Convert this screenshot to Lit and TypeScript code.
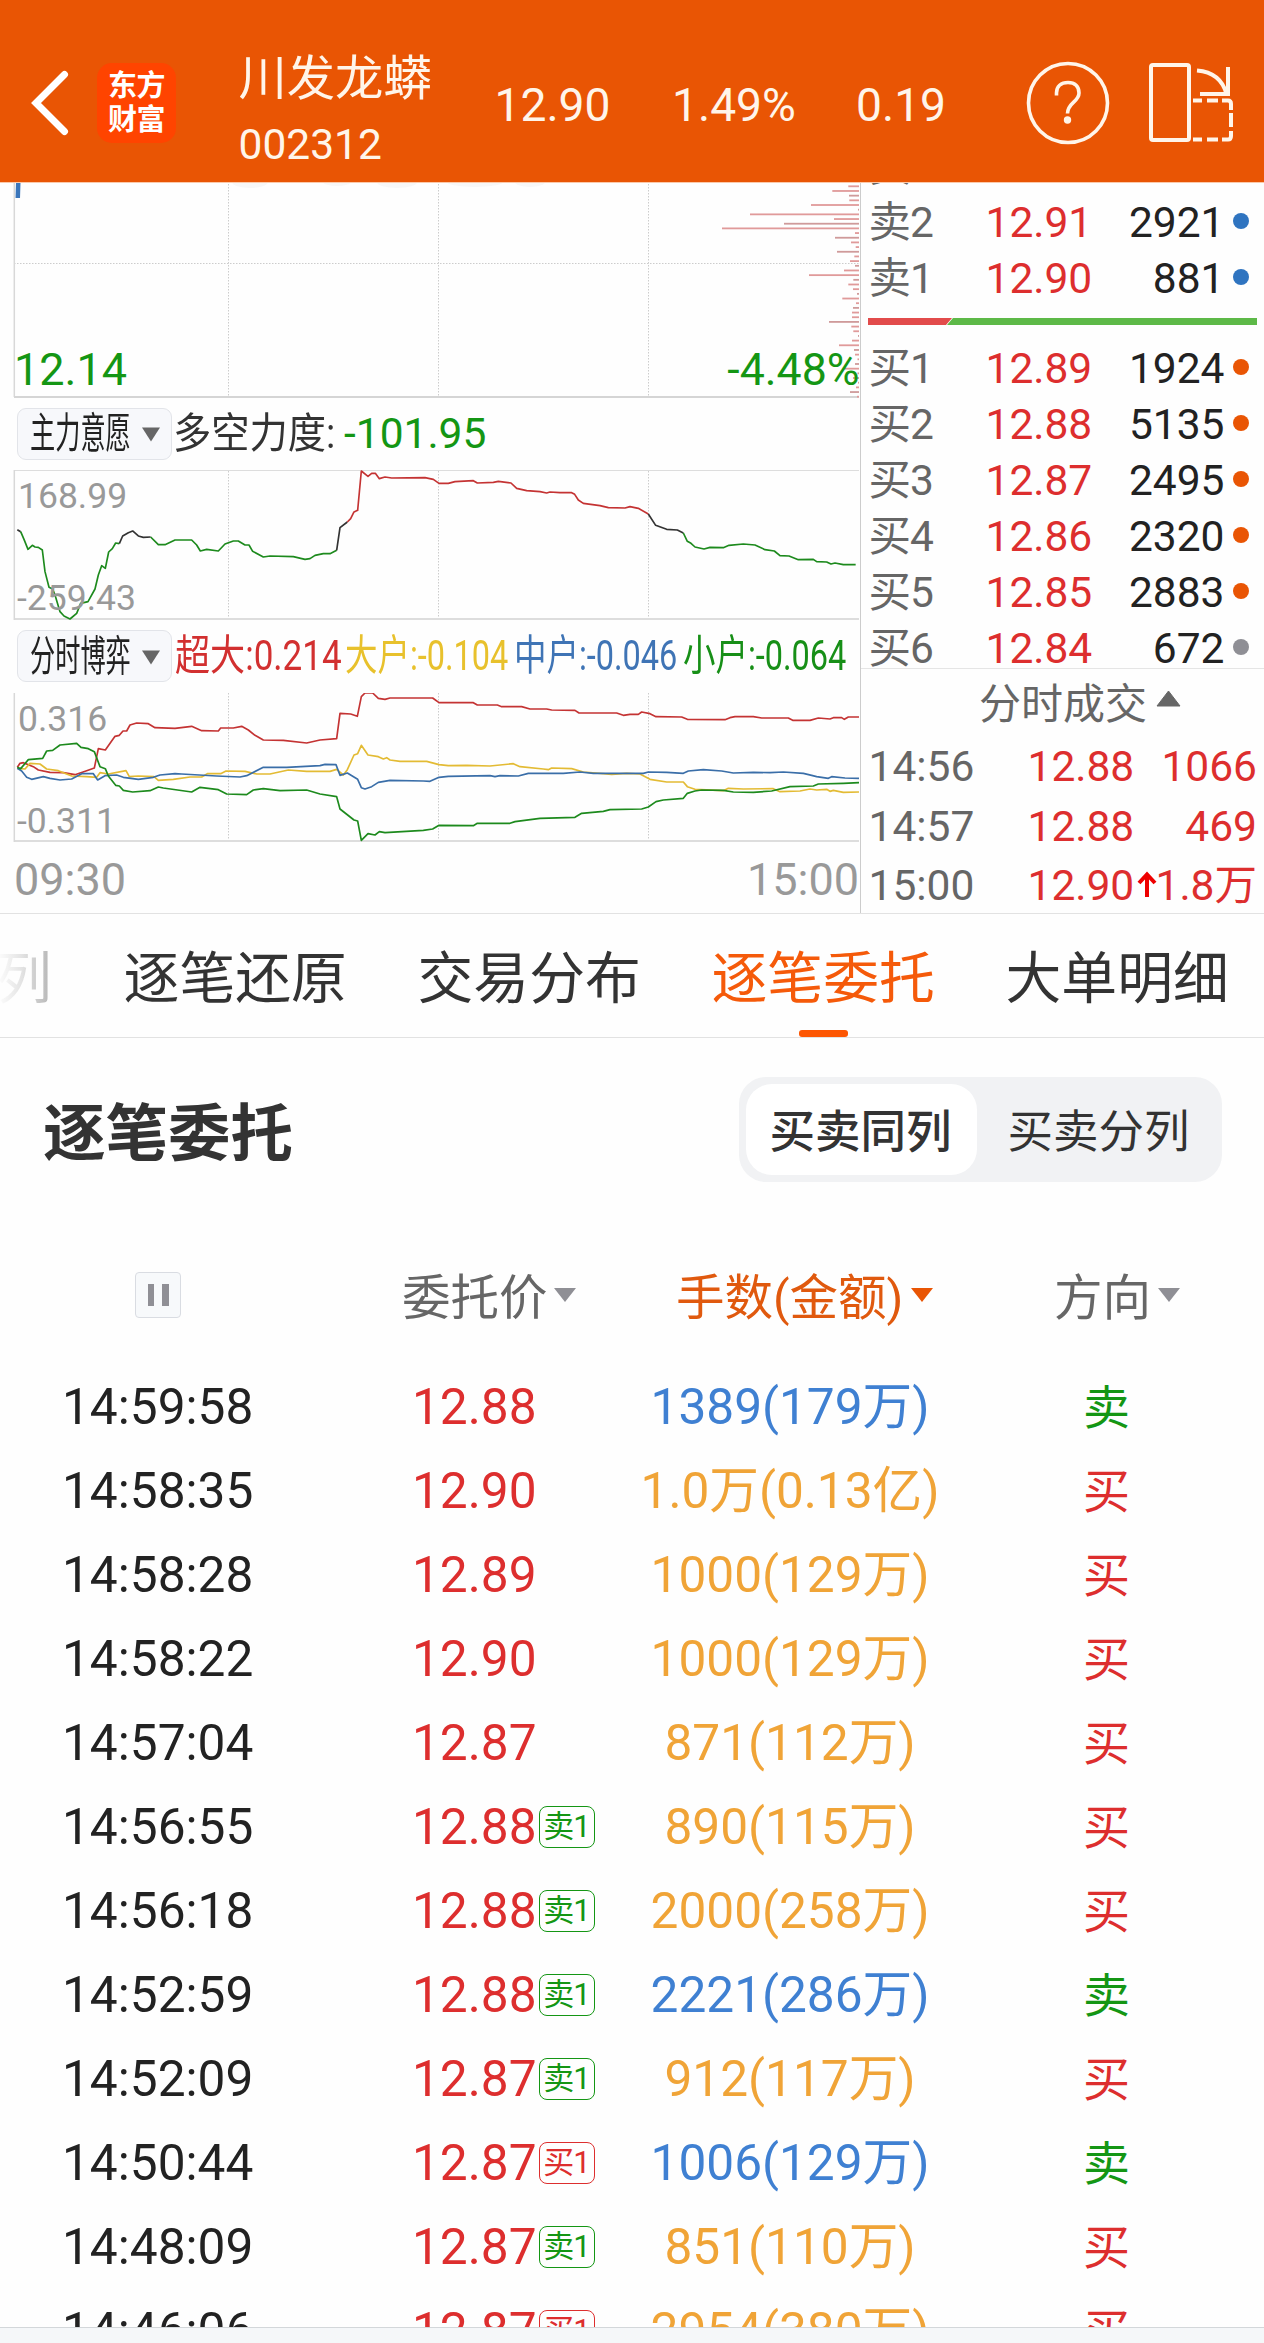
import { LitElement, html, svg, css } from "lit";
import { customElement } from "lit/decorators.js";

type Tone = "red" | "green" | "blue" | "orange" | "gray";

interface Level { label: string; price: string; volume: string; dot: Tone; }
interface Order { time: string; price: string; queue?: string; amount: string; tone: Tone; side: string; }

const SELLS: Level[] = [
  { label: "卖3", price: "12.92", volume: "1530", dot: "blue" },
  { label: "卖2", price: "12.91", volume: "2921", dot: "blue" },
  { label: "卖1", price: "12.90", volume: "881", dot: "blue" },
];
const BUYS: Level[] = [
  { label: "买1", price: "12.89", volume: "1924", dot: "orange" },
  { label: "买2", price: "12.88", volume: "5135", dot: "orange" },
  { label: "买3", price: "12.87", volume: "2495", dot: "orange" },
  { label: "买4", price: "12.86", volume: "2320", dot: "orange" },
  { label: "买5", price: "12.85", volume: "2883", dot: "orange" },
  { label: "买6", price: "12.84", volume: "672", dot: "gray" },
];
const TRADES = [
  { time: "14:56", price: "12.88", volume: "1066", up: false },
  { time: "14:57", price: "12.88", volume: "469", up: false },
  { time: "15:00", price: "12.90", volume: "1.8万", up: true },
];
const ORDERS: Order[] = [
  { time: "14:59:58", price: "12.88", amount: "1389(179万)", tone: "blue", side: "卖" },
  { time: "14:58:35", price: "12.90", amount: "1.0万(0.13亿)", tone: "orange", side: "买" },
  { time: "14:58:28", price: "12.89", amount: "1000(129万)", tone: "orange", side: "买" },
  { time: "14:58:22", price: "12.90", amount: "1000(129万)", tone: "orange", side: "买" },
  { time: "14:57:04", price: "12.87", amount: "871(112万)", tone: "orange", side: "买" },
  { time: "14:56:55", price: "12.88", queue: "卖1", amount: "890(115万)", tone: "orange", side: "买" },
  { time: "14:56:18", price: "12.88", queue: "卖1", amount: "2000(258万)", tone: "orange", side: "买" },
  { time: "14:52:59", price: "12.88", queue: "卖1", amount: "2221(286万)", tone: "blue", side: "卖" },
  { time: "14:52:09", price: "12.87", queue: "卖1", amount: "912(117万)", tone: "orange", side: "买" },
  { time: "14:50:44", price: "12.87", queue: "买1", amount: "1006(129万)", tone: "blue", side: "卖" },
  { time: "14:48:09", price: "12.87", queue: "卖1", amount: "851(110万)", tone: "orange", side: "买" },
  { time: "14:46:06", price: "12.87", queue: "买1", amount: "2954(380万)", tone: "orange", side: "买" },
];

// Price-distribution bar lengths, one bar every 4.68px from the top.
const BARS = [10.7, 26.7, 10, 9.7, 48, 1, 109, 25, 75, 137, 4, 24, 8, 3.3, 22, 4.7, 9, 4, 15, 50, 5.7, 10.7, 6, 2,
  16.7, 3, 6, 7, 7, 30, 7.7, 5.7, 1, 7, 20, 5, 4, 1.5, 4, 14.7, 1.5, 6, 1, 3, 9, 2];

// Series use a 3-unit-per-pixel grid.
const WILL: [string, string][] = [
  ["#333", "52,1079 62,1085"],
  ["#1d8a1d", "62,1085 72,1108 84,1138 97,1126 105,1131 115,1132 127,1140 135,1205 147,1252 158,1257 165,1275 180,1325 192,1338 210,1347 230,1330 242,1300 264,1295 285,1257 295,1215 305,1187 316,1195 326,1146 337,1136 347,1119 358,1121"],
  ["#333", "358,1121 368,1098 385,1088 398,1083 415,1098 430,1102 452,1101"],
  ["#1d8a1d", "452,1101 475,1124 495,1124 525,1110 575,1110 590,1125 601,1143 620,1138 655,1143 675,1122 700,1113 715,1113 735,1125 747,1125 758,1144 790,1161 810,1158 880,1160 915,1168 930,1166 945,1156 970,1151 990,1151 1010,1141"],
  ["#333", "1010,1141 1020,1073 1042,1056"],
  ["#c43333", "1042,1056 1052,1046 1062,1026 1073,1021 1084,903 1104,919 1115,910 1126,910 1138,926 1155,921 1175,924 1275,923 1300,928 1317,940 1345,940 1365,935 1420,932 1432,939 1480,937 1495,934 1533,939 1550,955 1580,962 1620,965 1640,969 1650,966 1680,968 1715,968 1724,973 1735,990 1750,1000 1800,1007 1825,1013 1875,1014 1890,1010 1915,1015 1945,1032"],
  ["#333", "1945,1032 1967,1066 2000,1078 2032,1080 2050,1089"],
  ["#1d8a1d", "2050,1089 2062,1114 2073,1120 2085,1131 2112,1137 2130,1132 2170,1133 2187,1126 2230,1122 2265,1125 2295,1139 2323,1143 2340,1157 2367,1158 2395,1169 2440,1168 2450,1175 2480,1176 2493,1182 2505,1179 2530,1184 2567,1184"],
];
const GAME: [string, string][] = [
  ["#c43333", "52,442 60,430 70,428 100,440 115,450 150,457 190,458 225,464 260,452 283,444 295,386 316,390 345,349 358,346 369,333 380,333 390,315 410,309 445,311 465,323 525,325 575,319 605,332 655,333 662,324 700,324 725,319 745,330 765,346 790,360 850,361 920,369 960,360 1010,356 1020,280 1052,282 1072,289 1084,230 1095,219 1118,219 1135,235 1155,238 1170,234 1298,234 1317,248 1420,248 1432,255 1492,255 1505,260 1565,260 1590,267 1640,267 1655,270 1725,271 1737,279 1850,279 1870,286 1890,283 1915,283 1925,276 1950,281 1968,290 2045,291 2062,298 2175,299 2190,293 2205,290 2260,290 2285,294 2365,294 2378,301 2430,301 2455,294 2490,297 2500,293 2525,293 2533,298 2545,291 2577,291"],
  ["#e3bb34", "52,445 75,447 90,430 120,432 140,447 175,452 215,468 260,470 290,472 300,458 325,462 378,452 388,470 415,468 462,470 475,481 520,478 570,471 605,471 622,461 662,461 678,453 735,454 770,462 810,462 865,450 920,454 990,454 1010,448 1030,465 1042,449 1062,405 1073,401 1084,376 1104,405 1135,410 1150,417 1160,413 1170,420 1200,424 1280,424 1317,434 1345,437 1400,436 1470,438 1540,431 1560,440 1630,447 1645,449 1655,444 1715,446 1750,456 1835,463 1880,460 1920,462 1950,478 2000,486 2050,486 2062,500 2085,508 2170,512 2185,505 2230,507 2320,506 2340,515 2400,513 2430,507 2450,510 2480,508 2490,514 2500,511 2530,517 2577,516"],
  ["#3a6ea8", "52,445 65,453 80,472 95,478 130,470 150,475 180,480 215,477 245,461 280,461 293,480 315,467 350,465 370,472 415,478 460,472 480,465 525,461 545,462 650,468 720,471 740,467 790,442 860,442 960,437 975,433 1008,434 1020,466 1042,459 1073,478 1084,503 1095,507 1115,500 1135,487 1170,481 1270,483 1290,484 1317,472 1345,469 1470,467 1485,470 1500,467 1555,468 1585,460 1690,460 1740,456 1780,460 1930,460 1945,456 2000,457 2050,460 2065,453 2110,449 2165,453 2200,459 2260,457 2310,458 2350,456 2410,460 2435,466 2450,470 2485,475 2495,470 2535,474 2577,475"],
  ["#1d8a1d", "52,442 62,446 85,419 128,415 140,393 158,391 180,375 230,370 243,382 265,386 283,395 300,440 316,446 325,468 347,496 358,498 370,511 398,516 450,512 475,501 490,504 575,516 600,502 655,509 680,522 740,524 760,510 790,506 840,512 920,510 960,522 1010,530 1020,567 1062,600 1073,603 1084,661 1104,641 1125,645 1138,635 1155,638 1270,631 1298,627 1317,616 1420,617 1432,610 1530,610 1545,605 1620,595 1725,592 1745,580 1810,574 1830,569 1925,567 1945,561 1968,545 1990,540 2050,535 2062,520 2085,513 2105,510 2170,511 2200,516 2260,517 2315,513 2370,500 2440,498 2455,492 2530,490 2577,488"],
];

const base = css`
  :host { display: block; font-family: Roboto, "Noto Sans CJK SC", sans-serif; font-weight: 400; }
  * { box-sizing: border-box; }
  svg { display: block; flex: none; }
  .red { color: #dd2e2e; }
  .green { color: #149614; }
  .blue { color: #3f80d2; }
  .orange { color: #f0a437; }
  .gray { color: #8f8f95; }
`;

@customElement("stock-header")
class StockHeader extends LitElement {
  static styles = [base, css`
    .bar { height: 183px; background: #e95504; border-bottom: 1px solid #fbc9aa; display: flex; color: #fff5ea; padding-top: 26px; }
    .bar > div { flex: none; }
    .back { width: 97px; padding: 42px 0 0 28px; }
    .logo { width: 79px; height: 80px; margin-top: 37px; border-radius: 15px; background: #ff4400; color: #fff; font-size: 29px; font-weight: 700; line-height: 34px; text-align: center; padding-top: 6px; letter-spacing: -0.5px; }
    .name { width: 256px; margin-left: 62.5px; }
    .title { font-size: 48.3px; line-height: 56px; margin-top: 25px; }
    .code { font-size: 42.5px; line-height: 50px; margin-top: 13px; }
    .num { font-size: 46.2px; line-height: 56px; margin-top: 51px; }
    .price { width: 177.5px; }
    .pct { width: 184px; }
    .chg { width: 170px; }
    .help { width: 120px; padding-top: 35px; }
    .turn { padding-top: 35px; }
  `];
  render() {
    return html`<div class="bar">
      <div class="back"><svg width="44" height="70" viewBox="0 0 44 70" fill="none" stroke="#fff" stroke-width="7" stroke-linecap="round" stroke-linejoin="miter"><path d="M36.500 6.500 L8 35 L36.500 63.500"/></svg></div>
      <div class="logo">东方<br>财富</div>
      <div class="name"><div class="title">川发龙蟒</div><div class="code">002312</div></div>
      <div class="num price">12.90</div>
      <div class="num pct">1.49%</div>
      <div class="num chg">0.19</div>
      <div class="help"><svg width="86" height="84" viewBox="1 0 86 84" fill="none" stroke="#fff5ea" stroke-width="3.600"><circle cx="43" cy="42" r="39.500"/><path d="M31.500 34.500 V32 C31.500 25.500 36 21.500 43 21.500 C50 21.500 54 25.500 54 32 C54 41 42.500 41.500 42.500 52.500"/><circle cx="42.500" cy="59" r="3.700" fill="#fff5ea" stroke="none"/></svg></div>
      <div class="turn"><svg width="90" height="84" viewBox="0 0 90 84" fill="none" stroke="#fff5ea" stroke-width="4"><rect x="5" y="4" width="38" height="75" rx="2"/><path d="M51 9.500 C69 11 77 20 80.500 33"/><path d="M82 6 V33 H54"/><path d="M47 39.500 H56 M61 39.500 H72 M76 39.500 H82 Q85 39.500 85 43 V49 M85 52 V66 M85 70 V75 Q85 78.500 82 78.500 H76 M72 78.500 H61 M56 78.500 H47"/></svg></div>
    </div>`;
  }
}

@customElement("minute-charts")
class MinuteCharts extends LitElement {
  static styles = [base, css`
    :host { flex: none; width: 860px; height: 730px; overflow: hidden; }
    .panel { position: relative; }
    .top { height: 216px; }
    .lbl { position: absolute; line-height: 40px; white-space: nowrap; }
    .low { left: 14px; bottom: 9.5px; font-size: 45px; }
    .drop { right: 0.5px; bottom: 9.5px; font-size: 44.7px; }
    .scale { font-size: 35.5px; color: #999; }
    .hi { left: 18px; top: 5.5px; }
    .lo { left: 17px; bottom: 3px; }
    .row { display: flex; align-items: center; padding-left: 17px; font-size: 42.5px; line-height: 52px; white-space: nowrap; }
    .row > * { flex: none; }
    .row.first { height: 71px; padding-bottom: 2px; }
    .row.second { height: 72px; padding-bottom: 2px; }
    .pill { width: 155px; height: 52px; border: 1px solid #e2e4e9; border-radius: 9px; background: #f7f8fb; color: #222; display: flex; align-items: center; padding-left: 12px; font-size: 42px; line-height: 51px; }
    .pill svg { margin-top: 2px; }
    .sq { display: inline-block; transform-origin: left center; }
    .pill .slot { width: 112px; }
    .pill .sq { transform: scaleX(0.6); }
    .force { width: 172px; padding-left: 1px; color: #333; }
    .force .sq { transform: scaleX(0.9); }
    .legend { display: flex; font-size: 42px; }
    .legend div { flex: none; }
    .legend .sq { transform: scaleX(0.773); }
    .l1 { width: 170px; padding-left: 3px; color: #d23030; }
    .legend .l1 .sq { transform: scaleX(0.835); }
    .l2 { width: 172px; padding-left: 3px; color: #e8c12c; }
    .l3 { width: 169px; padding-left: 0; color: #3f74b5; }
    .l4 { width: 165px; color: #178f17; }
    .axis { display: flex; justify-content: space-between; padding: 0 1px 0 14px; font-size: 45px; line-height: 72px; color: #999; }
  `];
  private lines(series: [string, string][], y: number) {
    return svg`<g transform=${`translate(0 ${y}) scale(0.33333)`} fill="none" stroke-width="5" stroke-linejoin="round">
      ${series.map(([c, p]) => svg`<polyline stroke=${c} points=${p}></polyline>`)}</g>`;
  }
  private caret() {
    return html`<svg width="18" height="15" viewBox="0 0 18 15"><path d="M0 0.500 H18 L9 14.500 Z" fill="#666"/></svg>`;
  }
  private subgrid() {
    return svg`<path d="M228.500 1 V149 M438.500 1 V149 M648.500 1 V149" stroke="#ccc" stroke-dasharray="1.500 1.500"/>
      <path d="M14 0.500 H859" stroke="#ddd"/><path d="M14 149 H859" stroke="#ddd" stroke-width="2"/><path d="M14.300 0 V150" stroke="#d8d8d8" stroke-width="1.500"/>`;
  }
  render() {
    return html`
      <div class="panel top">
        <svg width="860" height="216" viewBox="0 183 860 216">
          <g fill="#f7f7f7"><ellipse cx="250" cy="182" rx="18" ry="6"/><ellipse cx="337" cy="182" rx="14" ry="4"/><ellipse cx="397" cy="182" rx="20" ry="6"/><ellipse cx="475" cy="182" rx="28" ry="5"/><ellipse cx="530" cy="182" rx="15" ry="5"/></g>
          <path d="M228.500 184 V396 M438.500 184 V396 M648.500 184 V396 M14 263.500 H859" stroke="#ccc" stroke-dasharray="1.500 1.500"/>
          <path d="M14.300 183 V397" stroke="#d8d8d8" stroke-width="1.500"/><path d="M14 397 H859" stroke="#d5d5d5" stroke-width="2"/>
          <path d="M16 183 H20.500 L20 198 H15.500 Z" fill="#3b76bb"/>
          ${BARS.map((w, i) => svg`<rect x=${859 - w} y=${185.4 + i * 4.676} width=${w} height="1.800" fill=${i % 3 === 2 ? "#cf9a9a" : "#e09a9a"}></rect>`)}
        </svg>
        <span class="lbl low green">12.14</span><span class="lbl drop green">-4.48%</span>
      </div>
      <div class="row first">
        <div class="pill"><span class="slot"><span class="sq">主力意愿</span></span>${this.caret()}</div>
        <div class="force"><span class="sq">多空力度:</span></div><span class="green">-101.95</span>
      </div>
      <div class="panel">
        <svg width="860" height="151" viewBox="0 0 860 151">${this.subgrid()}</svg>
        <svg class="lbl" style="left:0;top:0" width="860" height="151" viewBox="0 470 860 151">${this.lines(WILL, 170)}</svg>
        <span class="lbl scale hi">168.99</span><span class="lbl scale lo">-259.43</span>
      </div>
      <div class="row second">
        <div class="pill"><span class="slot"><span class="sq">分时博弈</span></span>${this.caret()}</div>
        <div class="legend">
          <div class="l1"><span class="sq">超大:0.214</span></div><div class="l2"><span class="sq">大户:-0.104</span></div>
          <div class="l3"><span class="sq">中户:-0.046</span></div><div class="l4"><span class="sq">小户:-0.064</span></div>
        </div>
      </div>
      <div class="panel">
        <svg width="860" height="151" viewBox="0 1 860 151">${this.subgrid()}</svg>
        <svg class="lbl" style="left:0;top:0" width="860" height="151" viewBox="0 693 860 151">${this.lines(GAME, 620)}</svg>
        <span class="lbl scale hi">0.316</span><span class="lbl scale lo">-0.311</span>
      </div>
      <div class="axis"><span>09:30</span><span>15:00</span></div>`;
  }
}

@customElement("order-book")
class OrderBook extends LitElement {
  static styles = [base, css`
    :host { flex: none; width: 404px; height: 730px; border-left: 1px solid #ccc; overflow: hidden; font-size: 42.5px; }
    .sells { height: 135px; display: flex; flex-direction: column; justify-content: flex-end; overflow: hidden; padding-bottom: 11px; }
    .lv { flex: none; height: 56px; line-height: 56px; display: grid; grid-template-columns: 117px 110px 129px 1fr; padding-left: 7.5px; white-space: nowrap; }
    .lab { color: #666; letter-spacing: -1px; }
    .vol { color: #222; text-align: right; }
    .dot { width: 16px; height: 16px; border-radius: 50%; margin: 18px 0 0 8px; }
    .dot.blue { background: #2f74c0; }
    .dot.orange { background: #e95504; }
    .dot.gray { background: #8f8f95; }
    .buys { height: 344px; padding-top: 16px; overflow: hidden; border-bottom: 1px solid #e5e5e5; }
    .ratio { margin-left: 7px; }
    .cap { height: 68px; line-height: 71px; display: flex; padding-left: 118px; color: #666; font-size: 42px; }
    .cap svg { margin: 21px 0 0 9px; }
    .tr { height: 59.5px; line-height: 59.5px; display: grid; grid-template-columns: 159px 106px 1fr; padding: 0 7px 0 7.5px; font-size: 42.5px; white-space: nowrap; }
    .t { color: #666; }
    .q { display: flex; justify-content: flex-end; }
    .q svg { margin: 15px -1px 0 0; }
  `];
  private level(l: Level) {
    return html`<div class="lv"><span class="lab">${l.label}</span><span class="red">${l.price}</span><span class="vol">${l.volume}</span><i class="dot ${l.dot}"></i></div>`;
  }
  render() {
    return html`<div class="sells">${SELLS.map((l) => this.level(l))}</div>
      <svg class="ratio" width="389" height="7" viewBox="0 0 389 7"><path d="M0 0 H84 L78 7 H0 Z" fill="#e24b4b"/><path d="M85 0 H389 V7 H79 Z" fill="#5db948"/></svg>
      <div class="buys">${BUYS.map((l) => this.level(l))}</div>
      <div class="cap">分时成交<svg width="25" height="17" viewBox="0 0 25 17"><path d="M1 16 L12.500 1 L24 16 Z" fill="#666" stroke="#666" stroke-linejoin="round"/></svg></div>
      ${TRADES.map((t) => html`<div class="tr"><span class="t">${t.time}</span><span class="red">${t.price}</span><span class="q red">${t.up
        ? html`<svg width="20" height="27" viewBox="0 0 20 27" fill="none" stroke="#ee0000" stroke-width="4"><path d="M10 26 V4 M2 12 L10 3.500 L18 12"/></svg>` : ""}<span>${t.volume}</span></span></div>`)}`;
  }
}

@customElement("order-list")
class OrderList extends LitElement {
  static styles = [base, css`
    .tabs { height: 125px; border-top: 1px solid #e2e2e2; border-bottom: 1px solid #e2e2e2; display: flex; gap: 70.800px; margin-left: -3px; font-size: 55.800px; color: #333; white-space: nowrap; overflow: hidden; }
    .tabs > * { flex: none; }
    .cut { background: linear-gradient(90deg, #fff 0%, #e4e4e4 45%, #b4b4b4 100%); -webkit-background-clip: text; background-clip: text; color: transparent; margin-left: -1px; margin-right: 1px; }
    .on { color: #f55a0a; display: flex; flex-direction: column; align-items: center; }
    .on span { height: 116px; }
    .on i { width: 49px; height: 7px; border-radius: 3px; background: #fd5602; }
    .tabs > span, .on span { line-height: 130px; }
    .head { display: flex; justify-content: space-between; padding: 39px 42px 0 43px; height: 233px; }
    .head h2 { margin: 0; font-size: 62.500px; line-height: 105px; font-weight: 700; color: #333; padding-top: 5px; }
    .toggle { width: 483px; height: 105px; border-radius: 27px; background: #f1f2f4; padding: 7px; display: flex; font-size: 45.500px; line-height: 97px; color: #333; }
    .toggle div { flex: 1; text-align: center; padding-left: 5px; }
    .toggle .sel { flex: none; width: 231px; background: #fff; border-radius: 26px; font-weight: 500; height: 91px; line-height: 97px; padding: 0 2px 0 0; }
    .grid { display: grid; grid-template-columns: 350px 200px 356px 278px; padding-left: 62px; }
    .cols { height: 94.500px; font-size: 48.500px; line-height: 56px; color: #666; }
    .cols > div { display: flex; }
    .cols svg { margin: 17px 0 0 6.500px; }
    .cols .pr { margin-left: -10px; }
    .cols .am { color: #e0590e; padding-left: 64px; }
    .cols .am svg { margin-left: 7.500px; }
    .cols .sd { padding-left: 86px; }
    .cols .sd svg { margin-left: 7px; }
    .pause { width: 46px; height: 46px; margin-left: 73px; border: 1px solid #d9dce2; border-radius: 4px; background: #f7f9fb; display: flex; justify-content: center; gap: 8px; padding-top: 11px; margin-top: 1px; }
    .pause i { width: 6.500px; height: 22px; background: #8f8f95; }
    .rows { height: 961.500px; overflow: hidden; }
    .rows .grid { height: 84px; line-height: 83.500px; font-size: 49.600px; white-space: nowrap; }
    .time { color: #222; }
    .p { display: flex; }
    .tag { width: 56px; height: 42px; margin: 20.500px 0 0 2px; border: 1px solid currentColor; border-radius: 8px; font-size: 31px; line-height: 40px; text-align: center; letter-spacing: -1px; }
    .c { text-align: center; }
    .side { font-size: 47px; padding-right: 1px; }
    .foot { height: 16px; border-top: 1px solid #d3d7da; background: #f5f7f9; }
  `];
  private tri(fill: string) {
    return html`<svg width="22" height="14" viewBox="0 0 22 14"><path d="M0 0 H22 L11 14 Z" fill=${fill}/></svg>`;
  }
  render() {
    return html`
      <div class="tabs"><span class="cut">列</span><span>逐笔还原</span><span>交易分布</span><div class="on"><span>逐笔委托</span><i></i></div><span>大单明细</span></div>
      <div class="head"><h2>逐笔委托</h2><div class="toggle"><div class="sel">买卖同列</div><div>买卖分列</div></div></div>
      <div class="grid cols">
        <div><div class="pause"><i></i><i></i></div></div>
        <div class="pr">委托价${this.tri("#8f8f95")}</div>
        <div class="am">手数(金额)${this.tri("#e95504")}</div>
        <div class="sd">方向${this.tri("#8f8f95")}</div>
      </div>
      <div class="rows">${ORDERS.map((o) => html`<div class="grid">
        <span class="time">${o.time}</span>
        <span class="p red">${o.price}${o.queue ? html`<span class="tag ${o.queue === "卖1" ? "green" : "red"}">${o.queue}</span>` : ""}</span>
        <span class="c ${o.tone}">${o.amount}</span>
        <span class="c side ${o.side === "卖" ? "green" : "red"}">${o.side}</span>
      </div>`)}</div>
      <div class="foot"></div>`;
  }
}

@customElement("app-root")
class AppRoot extends LitElement {
  static styles = [base, css`
    :host { width: 1264px; height: 2343px; background: #fefefe; overflow: hidden; }
    .quote { display: flex; height: 730px; }
  `];
  render() {
    return html`<stock-header></stock-header>
      <div class="quote"><minute-charts></minute-charts><order-book></order-book></div>
      <order-list></order-list>`;
  }
}
